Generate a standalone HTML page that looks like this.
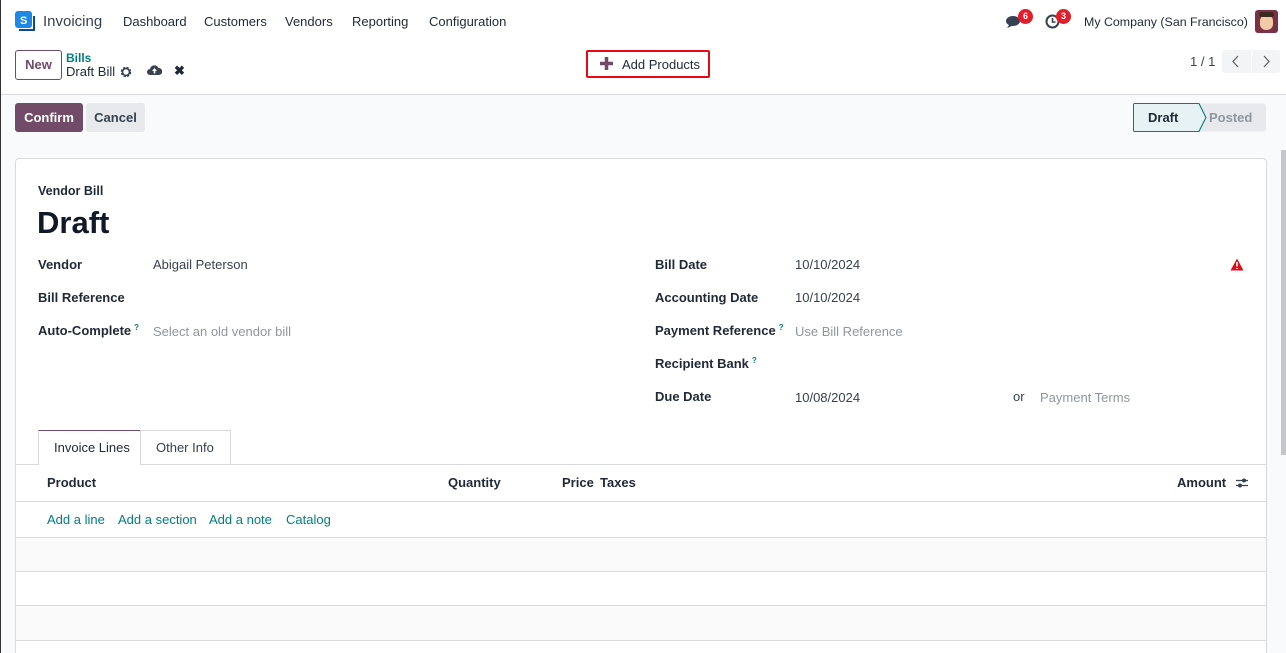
<!DOCTYPE html>
<html style="overflow:hidden;height:653px"><head><meta charset="utf-8"><style>
*{box-sizing:border-box;margin:0;padding:0}
body{width:1286px;height:653px;overflow:hidden;background:#f9fafb;font-family:"Liberation Sans",sans-serif;color:#374151;font-size:13px;position:relative}
.t{position:absolute;white-space:nowrap;line-height:20px}
.b{font-weight:bold;color:#1f2937}
.g{color:#8f96a0}
.l{color:#017e84}
.q{color:#017e84;font-size:8px;position:relative;top:-5px;margin-left:3px}
</style></head><body>
<div style="position:absolute;left:0;top:0;width:1286px;height:95px;background:#fff;border-bottom:1px solid #d8dadd"></div>
<div style="position:absolute;left:0;top:0;width:1px;height:653px;background:#333"></div>
<svg style="position:absolute;left:15px;top:11px" width="20" height="20" viewBox="0 0 20 20"><rect x="0" y="0" width="17" height="17" rx="3" fill="#1e88e5"/><path d="M4 19h15V5" fill="none" stroke="#0d47a1" stroke-width="2"/><text x="5" y="13" font-size="11" font-weight="bold" fill="#fff" font-family="Liberation Sans">S</text></svg>
<div class="t" style="left:43px;top:12px;font-size:15px;color:#374151">Invoicing</div>
<div class="t" style="left:123px;top:12px;color:#1f2937">Dashboard</div>
<div class="t" style="left:204px;top:12px;color:#1f2937">Customers</div>
<div class="t" style="left:285px;top:12px;color:#1f2937">Vendors</div>
<div class="t" style="left:352px;top:12px;color:#1f2937">Reporting</div>
<div class="t" style="left:429px;top:12px;color:#1f2937">Configuration</div>
<svg style="position:absolute;left:1006px;top:15px" width="18" height="14" viewBox="0 0 18 14"><ellipse cx="7" cy="6" rx="7" ry="5" fill="#374151"/><path d="M3 10l-2 3 5-2z" fill="#374151"/></svg>
<div class="t" style="left:1018px;top:9px;width:15px;height:15px;line-height:15px;border-radius:8px;background:#e41d2b;color:#fff;font-size:9px;font-weight:bold;text-align:center">6</div>
<svg style="position:absolute;left:1045px;top:14px" width="15" height="15" viewBox="0 0 15 15"><circle cx="7.5" cy="7.5" r="6" fill="none" stroke="#374151" stroke-width="2"/><path d="M7.5 4v4h3" fill="none" stroke="#374151" stroke-width="1.6"/></svg>
<div class="t" style="left:1056px;top:9px;width:15px;height:15px;line-height:15px;border-radius:8px;background:#e41d2b;color:#fff;font-size:9px;font-weight:bold;text-align:center">3</div>
<div class="t" style="left:1084px;top:12px;color:#1f2937;font-size:12.4px">My Company (San Francisco)</div>
<div style="position:absolute;left:1255px;top:10px;width:23px;height:23px;border-radius:3px;background:#7a3045"><div style="position:absolute;left:5px;top:5px;width:13px;height:15px;border-radius:6px;background:#f3c9a8"></div><div style="position:absolute;left:4px;top:2px;width:15px;height:5px;border-radius:3px;background:#3a2a22"></div></div>
<div style="position:absolute;left:15px;top:50px;width:47px;height:30px;border:1px solid #714b67;border-radius:3px;color:#714b67;font-weight:bold;text-align:center;line-height:28px">New</div>
<div class="t l b" style="left:66px;top:48px;font-size:12px;color:#017e84">Bills</div>
<div class="t" style="left:66px;top:62px;color:#1f2937">Draft Bill</div>
<svg style="position:absolute;left:120px;top:66px" width="12" height="12" viewBox="0 0 12 12"><circle cx="6" cy="6" r="4" fill="none" stroke="#374151" stroke-width="2.5" stroke-dasharray="2 1.2"/><circle cx="6" cy="6" r="3.5" fill="none" stroke="#374151" stroke-width="1.5"/></svg>
<svg style="position:absolute;left:147px;top:64px" width="15" height="12" viewBox="0 0 15 12"><path d="M3 11a3 3 0 0 1 0-6a4.5 4.5 0 0 1 8.5-1a3.5 3.5 0 0 1 0.5 7z" fill="#374151"/><path d="M7.5 4l-2.5 3h1.7v2.5h1.6V7H10z" fill="#fff"/></svg>
<div class="t b" style="left:174px;top:61px;font-size:13px;color:#1f2937">✖</div>
<div style="position:absolute;left:586px;top:50px;width:124px;height:28px;border:2px solid #e50914;border-radius:2px"></div>
<svg style="position:absolute;left:599px;top:56px" width="15" height="15" viewBox="0 0 15 15"><path d="M7.5 1v13M1 7.5h13" stroke="#714b67" stroke-width="3.5"/></svg>
<div class="t" style="left:622px;top:55px;color:#1f2937">Add Products</div>
<div class="t" style="left:1190px;top:52px;color:#374151">1 / 1</div>
<div style="position:absolute;left:1222px;top:50px;width:29px;height:23px;background:#f3f4f6;border-radius:3px 0 0 3px"></div>
<div style="position:absolute;left:1252px;top:50px;width:28px;height:23px;background:#f3f4f6;border-radius:0 3px 3px 0"></div>
<svg style="position:absolute;left:1231px;top:55px" width="10" height="13"><path d="M7 1L2 6.5 7 12" fill="none" stroke="#666" stroke-width="1.3"/></svg>
<svg style="position:absolute;left:1261px;top:55px" width="10" height="13"><path d="M3 1l5 5.5L3 12" fill="none" stroke="#666" stroke-width="1.3"/></svg>
<div style="position:absolute;left:15px;top:103px;width:68px;height:29px;background:#714b67;border-radius:3px;color:#fff;font-weight:bold;text-align:center;line-height:29px">Confirm</div>
<div style="position:absolute;left:86px;top:103px;width:59px;height:29px;background:#e7e9ed;border-radius:3px;color:#374151;font-weight:bold;text-align:center;line-height:29px">Cancel</div>
<svg style="position:absolute;left:1133px;top:103px" width="134" height="29"><path d="M3 .5H1.5a1 1 0 0 0-1 1v26a1 1 0 0 0 1 1H66L73 14.5 66 .5z" fill="#e6f2f3" stroke="#017e84"/><path d="M66 .5L73 14.5 66 28.5H130a3 3 0 0 0 3-3v-22a3 3 0 0 0-3-3z" fill="#e7e9ed"/><path d="M66 .5L73 14.5 66 28.5" fill="none" stroke="#017e84"/></svg>
<div class="t b" style="left:1148px;top:108px;color:#1f2937">Draft</div>
<div class="t b" style="left:1209px;top:108px;color:#8f96a0">Posted</div>
<div style="position:absolute;left:15px;top:158px;width:1252px;height:495px;background:#fff;border:1px solid #d8dadd;border-bottom:none;border-radius:4px 4px 0 0"></div>
<div class="t b" style="left:38px;top:181px;font-size:12.5px">Vendor Bill</div>
<div class="t" style="left:37px;top:203px;font-size:31px;line-height:40px;color:#111827;font-weight:bold">Draft</div>
<div class="t b" style="left:38px;top:255px">Vendor</div>
<div class="t" style="left:153px;top:255px">Abigail Peterson</div>
<div class="t b" style="left:38px;top:288px">Bill Reference</div>
<div class="t b" style="left:38px;top:321px">Auto-Complete<span class="q">?</span></div>
<div class="t g" style="left:153px;top:322px">Select an old vendor bill</div>
<div class="t b" style="left:655px;top:255px">Bill Date</div>
<div class="t" style="left:795px;top:255px">10/10/2024</div>
<svg style="position:absolute;left:1230px;top:258px" width="14" height="13"><path d="M7 0.5L13.5 12.5H.5z" fill="#e50914"/><path d="M7 4v4.5M7 10v1" stroke="#fff" stroke-width="1.6"/></svg>
<div class="t b" style="left:655px;top:288px">Accounting Date</div>
<div class="t" style="left:795px;top:288px">10/10/2024</div>
<div class="t b" style="left:655px;top:321px">Payment Reference<span class="q">?</span></div>
<div class="t g" style="left:795px;top:322px">Use Bill Reference</div>
<div class="t b" style="left:655px;top:354px">Recipient Bank<span class="q">?</span></div>
<div class="t b" style="left:655px;top:387px">Due Date</div>
<div class="t" style="left:795px;top:388px">10/08/2024</div>
<div class="t" style="left:1013px;top:387px">or</div>
<div class="t g" style="left:1040px;top:388px">Payment Terms</div>
<div style="position:absolute;left:16px;top:464px;width:1250px;height:1px;background:#d8dadd"></div>
<div style="position:absolute;left:38px;top:430px;width:103px;height:35px;background:#fff;border:1px solid #d8dadd;border-top:1px solid #714b67;border-bottom:none"></div>
<div class="t" style="left:54px;top:438px;color:#1f2937">Invoice Lines</div>
<div style="position:absolute;left:140px;top:430px;width:91px;height:34px;border:1px solid #d8dadd;border-bottom:none"></div>
<div class="t" style="left:156px;top:438px;color:#374151">Other Info</div>
<div class="t b" style="left:47px;top:473px">Product</div>
<div class="t b" style="left:448px;top:473px">Quantity</div>
<div class="t b" style="left:562px;top:473px">Price</div>
<div class="t b" style="left:600px;top:473px">Taxes</div>
<div class="t b" style="left:1177px;top:473px">Amount</div>
<svg style="position:absolute;left:1235px;top:476px" width="14" height="14"><path d="M1 4.5h12M1 9.5h12" stroke="#374151" stroke-width="1.3"/><circle cx="9" cy="4.5" r="2" fill="#374151"/><circle cx="5" cy="9.5" r="2" fill="#374151"/></svg>
<div style="position:absolute;left:16px;top:501px;width:1250px;height:1px;background:#d8dadd"></div>
<div class="t l" style="left:47px;top:510px">Add a line</div>
<div class="t l" style="left:118px;top:510px">Add a section</div>
<div class="t l" style="left:209px;top:510px">Add a note</div>
<div class="t l" style="left:286px;top:510px">Catalog</div>
<div style="position:absolute;left:16px;top:537px;width:1250px;height:34px;background:#fafafa;border-top:1px solid #d8dadd"></div>
<div style="position:absolute;left:16px;top:571px;width:1250px;height:34px;background:#fff;border-top:1px solid #d8dadd"></div>
<div style="position:absolute;left:16px;top:605px;width:1250px;height:35px;background:#fafafa;border-top:1px solid #d8dadd"></div>
<div style="position:absolute;left:16px;top:640px;width:1250px;height:13px;background:#fff;border-top:1px solid #d8dadd"></div>
<div style="position:absolute;left:1281px;top:150px;width:5px;height:305px;background:#c4c6c9"></div>
</body></html>
